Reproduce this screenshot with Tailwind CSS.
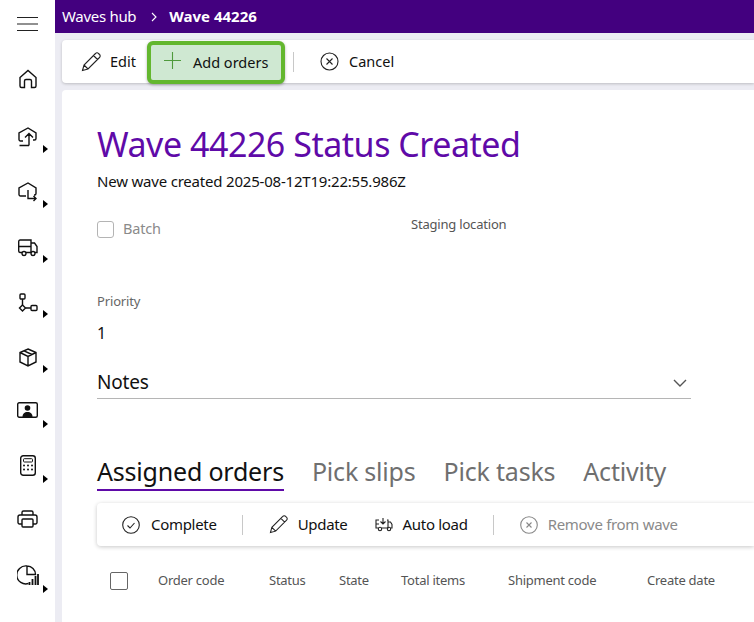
<!DOCTYPE html>
<html lang="en">
<head>
<meta charset="UTF-8">
<title>Wave 44226</title>
<script src="https://cdn.jsdelivr.net/npm/@tailwindcss/browser@4"></script>
</head>
<body class="overflow-hidden">
<div class="flex h-[622px] w-[754px] overflow-hidden bg-[#ececf3] font-['Noto_Sans',sans-serif] text-[#111]">

  <!-- left nav -->
  <nav class="w-[55px] shrink-0 bg-white flex flex-col items-stretch">
    <div class="h-[48px] flex items-center justify-center">
      <svg width="22" height="16" viewBox="0 0 22 16" fill="none" stroke="#222" stroke-width="1.2"><path d="M0 1.5H21M0 8H21M0 14.5H21"/></svg>
    </div>
    <div class="h-[62px] flex items-center justify-center">
      <svg width="20" height="20" viewBox="0 0 20 20" fill="none" stroke="#111" stroke-width="1.4"><path d="M2 8.5 10 1.5l8 7V17a1.5 1.5 0 0 1-1.5 1.5h-3V12a1.5 1.5 0 0 0-1.5-1.5H8A1.5 1.5 0 0 0 6.500 12v6.500h-3A1.500 1.500 0 0 1 2 17Z"/></svg>
    </div>
    <div class="relative h-[55px] pb-[1px] flex items-center justify-center">
      <svg width="20" height="20" viewBox="0 0 20 20" fill="none" stroke="#111" stroke-width="1.4"><path d="M5 14H2.500A1.500 1.500 0 0 1 1 12.500V6l9-5 8 5v5.500a1.500 1.500 0 0 1-1.500 1.500H15M11 18.500H1.500M11 18.500V7M7 10.500 11 6.500l4 4"/></svg>
      <span class="absolute left-[43px] top-[35px] w-0 h-0 border-y-[4px] border-y-transparent border-l-[5px] border-l-black"></span>
    </div>
    <div class="relative h-[55px] pb-[1px] flex items-center justify-center">
      <svg width="20" height="20" viewBox="0 0 20 20" fill="none" stroke="#111" stroke-width="1.4"><path d="M8 14H2.500A1.500 1.500 0 0 1 1 12.500V6l9-5 8 5v5.500a1.500 1.500 0 0 1-1.500 1.500H16M10 8v8.500h8M15.500 14l2.500 2.500-2.500 2.500"/></svg>
      <span class="absolute left-[43px] top-[35px] w-0 h-0 border-y-[4px] border-y-transparent border-l-[5px] border-l-black"></span>
    </div>
    <div class="relative h-[55px] flex items-center justify-center">
      <svg width="20" height="18" viewBox="0 0 20 18" fill="none" stroke="#111" stroke-width="1.4"><path d="M4 13.500H2A1.500 1.500 0 0 1 .7 12V2.500A1.500 1.500 0 0 1 2 1h11v12.500H8M13 4h3.500L19 7.500v6h-2M13 13.500h0M.7 7.500H13"/><circle cx="6" cy="14.500" r="2"/><circle cx="15" cy="14.500" r="2"/></svg>
      <span class="absolute left-[43px] top-[35px] w-0 h-0 border-y-[4px] border-y-transparent border-l-[5px] border-l-black"></span>
    </div>
    <div class="relative h-[55px] flex items-center justify-center">
      <svg width="20" height="20" viewBox="0 0 20 20" fill="none" stroke="#111" stroke-width="1.4"><rect x="2" y="1" width="5" height="5" rx="1"/><path d="M4.500 6v6M7.500 15H13"/><path d="M4.500 12 7.500 15 4.500 18 1.500 15Z"/><rect x="13" y="12.500" width="6" height="5" rx="1"/></svg>
      <span class="absolute left-[43px] top-[35px] w-0 h-0 border-y-[4px] border-y-transparent border-l-[5px] border-l-black"></span>
    </div>
    <div class="relative h-[55px] flex items-center justify-center">
      <svg width="18" height="19" viewBox="0 0 18 19" fill="none" stroke="#111" stroke-width="1.4"><path d="M9 1 17 4.500V14L9 18 1 14V4.500ZM1 4.500 9 8.500 17 4.500M9 8.500V18M5 2.800 13 6.500"/></svg>
      <span class="absolute left-[43px] top-[35px] w-0 h-0 border-y-[4px] border-y-transparent border-l-[5px] border-l-black"></span>
    </div>
    <div class="relative h-[55px] pb-[5px] flex items-center justify-center">
      <svg width="21" height="16" viewBox="0 0 21 16" fill="none"><rect x=".7" y=".7" width="19.600" height="14.600" rx="1.500" stroke="#111" stroke-width="1.400"/><circle cx="10.500" cy="6" r="2.800" fill="#111"/><path d="M5.500 15c0-3.500 2-5 5-5s5 1.500 5 5Z" fill="#111"/></svg>
      <span class="absolute left-[43px] top-[35px] w-0 h-0 border-y-[4px] border-y-transparent border-l-[5px] border-l-black"></span>
    </div>
    <div class="relative h-[55px] pb-[5px] flex items-center justify-center">
      <svg width="16" height="21" viewBox="0 0 16 21" fill="none"><rect x=".7" y=".7" width="14.600" height="19.600" rx="2.500" stroke="#111" stroke-width="1.400"/><rect x="3.500" y="3.700" width="9" height="3.300" rx=".8" stroke="#111"/><g fill="#111"><circle cx="4" cy="10.500" r="1"/><circle cx="8" cy="10.500" r="1"/><circle cx="12" cy="10.500" r="1"/><circle cx="4" cy="14.500" r="1"/><circle cx="8" cy="14.500" r="1"/><circle cx="12" cy="14.500" r="1"/></g></svg>
      <span class="absolute left-[43px] top-[35px] w-0 h-0 border-y-[4px] border-y-transparent border-l-[5px] border-l-black"></span>
    </div>
    <div class="h-[55px] pb-[7px] flex items-center justify-center">
      <svg width="21" height="18" viewBox="0 0 21 18" fill="none" stroke="#111" stroke-width="1.400"><path d="M5 5V2.500A1.500 1.500 0 0 1 6.500 1h8A1.500 1.500 0 0 1 16 2.500V5M5 14H2.500A1.500 1.500 0 0 1 1 12.500V7a2 2 0 0 1 2-2h15a2 2 0 0 1 2 2v5.500a1.500 1.500 0 0 1-1.500 1.500H16"/><rect x="5" y="9" width="11" height="8" rx="1"/></svg>
    </div>
    <div class="relative h-[55px] pb-[5px] flex items-center justify-center">
      <svg width="22" height="22" viewBox="0 0 22 22" fill="none" stroke="#111" stroke-width="1.400"><path d="M10 2a9 9 0 1 0 1.500 17.500M10 2v8.500h8.500A8.500 8.500 0 0 0 10 2Z"/><path d="M12.500 21v-3M15.500 21v-6M18.500 21v-9M21 21V10" stroke-width="1.800"/></svg>
      <span class="absolute left-[43px] top-[35px] w-0 h-0 border-y-[4px] border-y-transparent border-l-[5px] border-l-black"></span>
    </div>
  </nav>

  <div class="flex-1 min-w-0 flex flex-col">
    <!-- breadcrumb -->
    <header class="h-[33px] shrink-0 bg-[#43007f] text-white flex items-center pl-[7px] text-[15px] whitespace-nowrap">
      <span class="tracking-[-0.3px]">Waves hub</span>
      <svg class="ml-[15px] mr-[12px]" width="6" height="10" viewBox="0 0 6 10" fill="none" stroke="#fff" stroke-width="1.100"><path d="M1 1l4 4-4 4"/></svg>
      <span class="font-bold">Wave 44226</span>
    </header>

    <div class="flex-1 min-h-0 pl-[7px] pt-[7px] flex flex-col gap-[7px]">
      <!-- command bar -->
      <div class="h-[43px] shrink-0 bg-white rounded-l-[4px] shadow-[0_1px_3px_rgba(0,0,0,0.2)] flex items-center text-[14.5px] whitespace-nowrap">
        <div class="flex items-center pl-[19px] w-[86px]">
          <svg width="20" height="20" viewBox="0 0 20 20" fill="none" stroke="#222" stroke-width="1.100"><path d="M1.500 18.500 3 13 14.500 1.500a2 2 0 0 1 3 0l1 1a2 2 0 0 1 0 3L7 17Z M3 13 7 17M12.500 3.500l4 4"/></svg>
          <span class="ml-[9px]">Edit</span>
        </div>
        <div class="w-[138px] h-[43px] -ml-[1px] mt-[2px] rounded-[6px] border-[4px] border-[#63b72e] bg-[#cfe8d2] shadow-[0_1px_3px_rgba(0,0,0,0.3)] flex items-center pl-[13px]">
          <svg class="-mt-[4px]" width="17" height="17" viewBox="0 0 17 17" fill="none" stroke="#4f9a3c" stroke-width="1.100"><path d="M8.500 0V17M0 8.500H17"/></svg>
          <span class="ml-[12px]">Add orders</span>
        </div>
        <div class="w-px h-[20px] bg-[#c8c8c8] ml-[8px]"></div>
        <div class="flex items-center ml-[26px]">
          <svg width="19" height="19" viewBox="0 0 19 19" fill="none" stroke="#222" stroke-width="1.100"><circle cx="9.500" cy="9.500" r="8.500"/><path d="M6.500 6.500l6 6M12.500 6.500l-6 6"/></svg>
          <span class="ml-[10px]">Cancel</span>
        </div>
      </div>

      <!-- main card -->
      <main class="flex-1 min-h-0 bg-white rounded-tl-[4px] pl-[35px] overflow-hidden">
        <h1 class="text-[34px] leading-[44px] mt-[32px] text-[#5f0aa8] tracking-[-0.47px] whitespace-nowrap">Wave 44226 Status Created</h1>
        <p class="text-[15px] leading-[20px] mt-[5px] tracking-[-0.2px] whitespace-nowrap">New wave created 2025-08-12T19:22:55.986Z</p>

        <div class="flex mt-[26px] h-[24px]">
          <div class="flex items-center w-[314px]">
            <span class="w-[17px] h-[17px] rounded-[3px] border border-[#b4b4b4]"></span>
            <span class="ml-[9px] text-[14.5px] text-[#8a8a8a] tracking-[-0.2px]">Batch</span>
          </div>
          <span class="text-[13px] leading-[14px] text-[#555] tracking-[-0.2px] whitespace-nowrap">Staging location</span>
        </div>

        <div class="text-[13px] leading-[16px] mt-[52px] text-[#666] tracking-[-0.15px]">Priority</div>
        <div class="text-[16px] leading-[22px] mt-[13px]">1</div>

        <div class="w-[594px] h-[32px] mt-[23px] border-b border-[#b5b5b5] flex items-center justify-between pr-[4px] text-[19px] tracking-[-0.2px]">
          <span>Notes</span>
          <svg width="14" height="8" viewBox="0 0 14 8" fill="none" stroke="#555" stroke-width="1.400"><path d="M1 1l6 6 6-6"/></svg>
        </div>

        <!-- tabs -->
        <div class="flex mt-[54px] text-[25px] leading-[36px] tracking-[-0.2px] text-[#6f6f6f] whitespace-nowrap">
          <span class="text-[#111] border-b-2 border-[#5f0aa8] h-[38px]">Assigned orders</span>
          <span class="ml-[28px]">Pick slips</span>
          <span class="ml-[28px]">Pick tasks</span>
          <span class="ml-[28px]">Activity</span>
        </div>

        <!-- tab command bar -->
        <div class="h-[43px] mt-[12px] rounded-l-[4px] bg-white shadow-[0_1px_4px_rgba(0,0,0,0.22)] flex items-center text-[15px] tracking-[-0.3px] whitespace-nowrap">
          <div class="flex items-center pl-[25px]">
            <svg width="18" height="18" viewBox="0 0 18 18" fill="none" stroke="#222" stroke-width="1.100"><circle cx="9" cy="9" r="8.300"/><path d="M5.500 9.500 8 12l4.500-5"/></svg>
            <span class="ml-[11px]">Complete</span>
          </div>
          <div class="w-px h-[20px] bg-[#c8c8c8] ml-[25px]"></div>
          <div class="flex items-center ml-[26px]">
            <svg width="19" height="19" viewBox="0 0 20 20" fill="none" stroke="#222" stroke-width="1.100"><path d="M1.500 18.500 3 13 14.500 1.500a2 2 0 0 1 3 0l1 1a2 2 0 0 1 0 3L7 17Z M3 13 7 17M12.500 3.500l4 4"/></svg>
            <span class="ml-[10px]">Update</span>
          </div>
          <div class="flex items-center ml-[27px]">
            <svg width="18" height="15" viewBox="0 0 18 15" fill="none" stroke="#222" stroke-width="1.100"><path d="M3 11H1V3h3M12 3h1v8H7M13 5h2.500L17 7.500V11h-1M8 1v6M5.500 4.500 8 7l2.500-2.500M1 7h3"/><circle cx="5" cy="12" r="1.700"/><circle cx="14" cy="12" r="1.700"/></svg>
            <span class="ml-[10px]">Auto load</span>
          </div>
          <div class="w-px h-[20px] bg-[#c8c8c8] ml-[25px]"></div>
          <div class="flex items-center ml-[26px] text-[#8a8a8a]">
            <svg width="18" height="18" viewBox="0 0 18 18" fill="none" stroke="#888" stroke-width="1.100"><circle cx="9" cy="9" r="8.300"/><path d="M6.500 6.500l5 5M11.500 6.500l-5 5"/></svg>
            <span class="ml-[10px]">Remove from wave</span>
          </div>
        </div>

        <!-- table head -->
        <div class="flex items-center mt-[25px] h-[20px] pl-[13px] text-[13px] tracking-[-0.25px] text-[#555] whitespace-nowrap">
          <span class="w-[18px] h-[18px] rounded-[2px] border border-[#666]"></span>
          <span class="ml-[30px] w-[111px]">Order code</span>
          <span class="w-[70px]">Status</span>
          <span class="w-[62px]">State</span>
          <span class="w-[107px]">Total items</span>
          <span class="w-[139px]">Shipment code</span>
          <span>Create date</span>
        </div>
      </main>
    </div>
  </div>
</div>
</body>
</html>
